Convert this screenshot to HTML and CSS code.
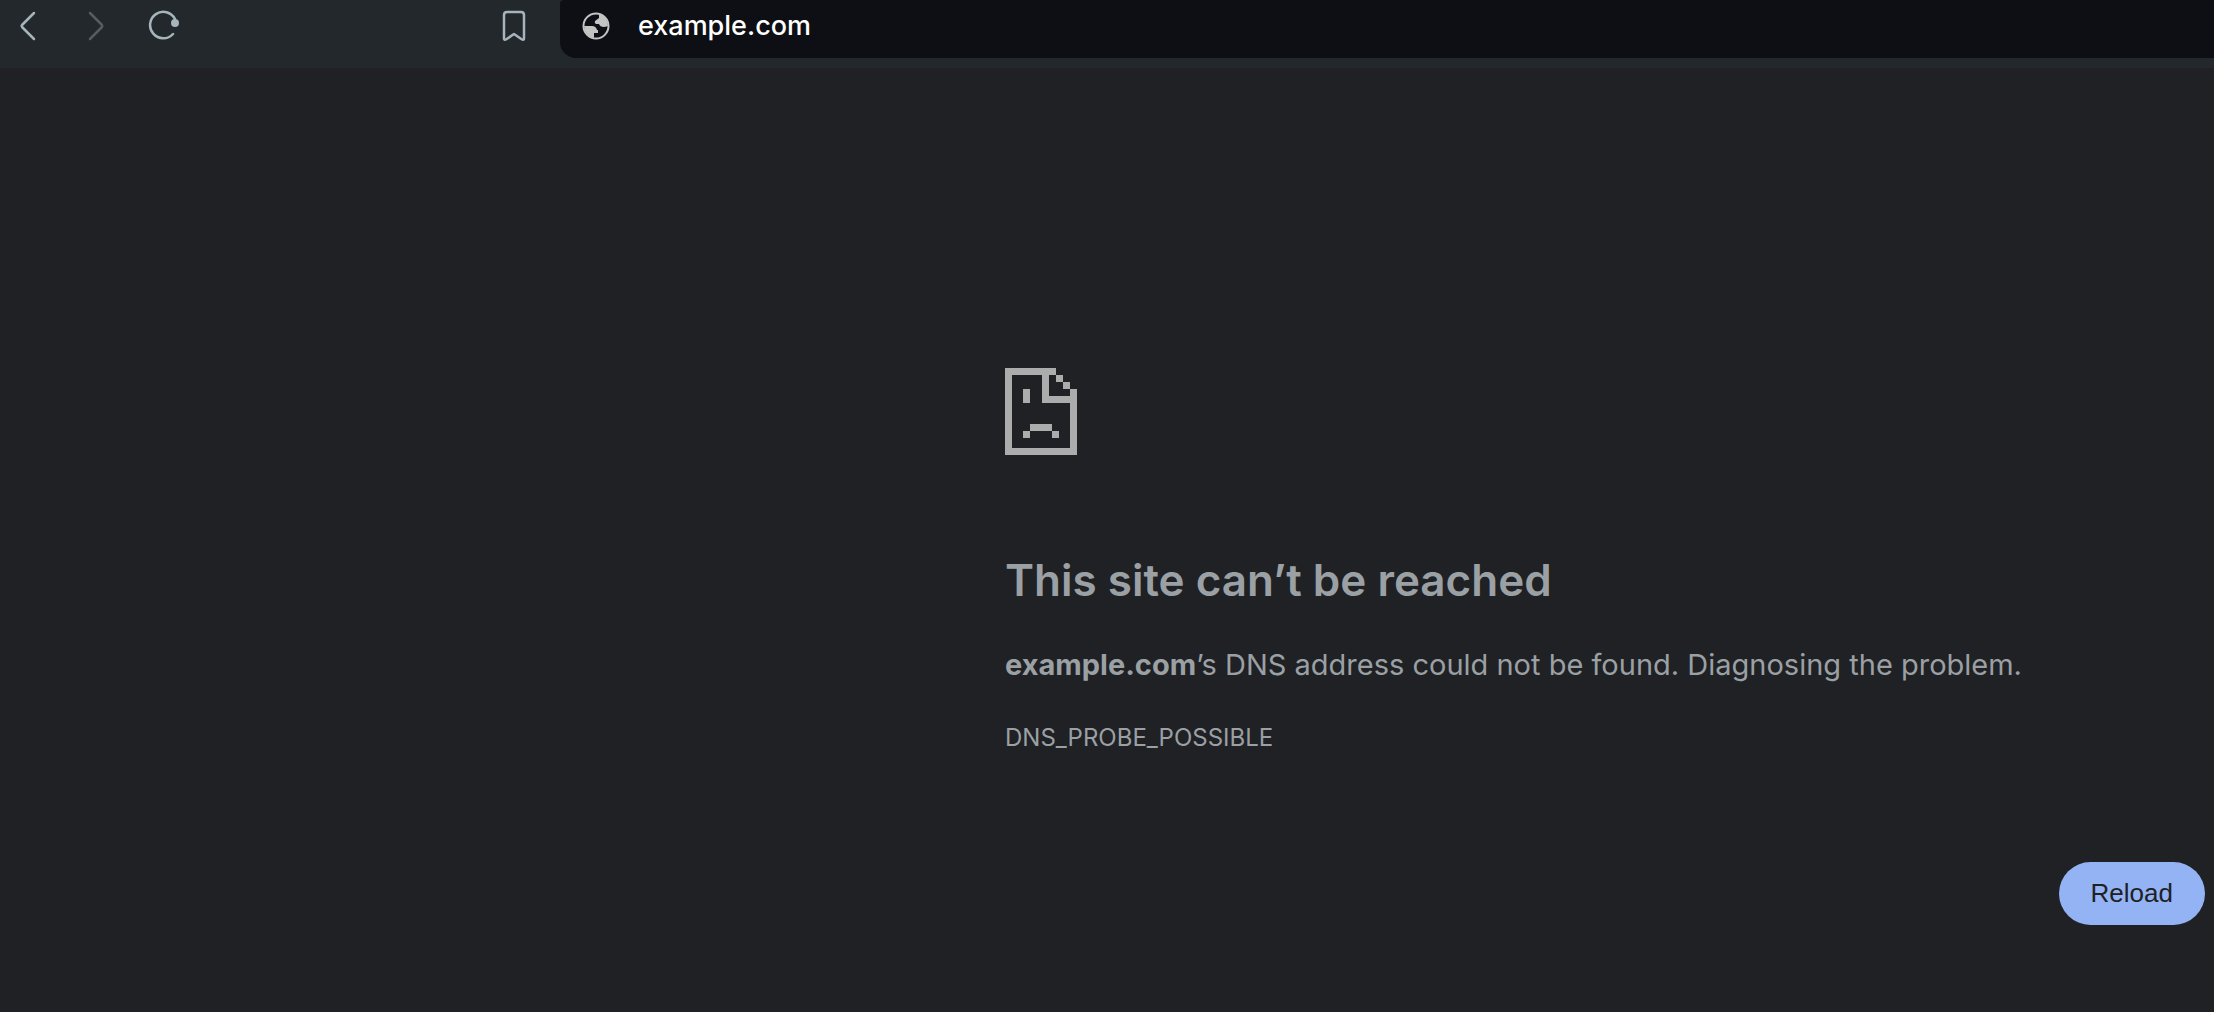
FILE: index.html
```html
<!DOCTYPE html>
<html lang="en">
<head>
<meta charset="utf-8">
<title>example.com</title>
<link rel="stylesheet" href="styles.css">
</head>
<body>
<header class="toolbar">
  <nav class="nav-buttons" aria-label="Browser navigation">
    <button class="icon-button" type="button" aria-label="Back">
      <svg width="32" height="32" viewBox="0 0 32 32"><path d="M22 3 10.500 14.500Q9 16 10.500 17.500L22 29" /></svg>
    </button>
    <button class="icon-button icon-button-dim" type="button" aria-label="Forward">
      <svg width="32" height="32" viewBox="0 0 32 32"><path d="M10 3 21.500 14.500Q23 16 21.500 17.500L10 29" /></svg>
    </button>
    <button class="icon-button" type="button" aria-label="Reload page">
      <svg width="32" height="32" viewBox="0 0 32 32"><path d="M25 24A13.200 13.200 0 1 1 27 9" /><circle class="solid" cx="27" cy="13" r="4" /></svg>
    </button>
  </nav>
  <button class="icon-button" type="button" aria-label="Bookmark">
    <svg width="32" height="32" viewBox="0 0 32 32"><path d="M6 28.500V5Q6 2 9 2H23Q26 2 26 5V28.500Q26 30.500 24 29.500L16 24 8 29.500Q6 30.500 6 28.500Z" /></svg>
  </button>
  <div class="address">
    <svg class="globe" width="28" height="28" viewBox="0 0 28 28" aria-hidden="true">
      <circle class="globe-ring" cx="14" cy="14" r="12.500" />
      <path class="globe-land" d="M17 2Q25 4 26 14Q23 15 22 15Q18 15 17 12H14Q12 11 13 9L17 6ZM2 14H10Q14 14 15 18H16V21H12V26Q3 24 2 14Z" />
    </svg>
    <input class="address-input" type="text" aria-label="Address" value="example.com">
  </div>
</header>
<main class="page">
  <section class="error">
    <svg class="sad-page" width="72" height="87" viewBox="0 0 72 87" aria-hidden="true">
      <path d="M0 0H51V7H44V28H65V21H72V87H0ZM7 7V80H65V35H37V7Z" />
      <path d="M51 7h7v7h-7zM58 14h7v7h-7zM18 21h7v14h-7zM25 56h22v7H25zM18 63h7v7h-7zM47 63h7v7h-7z" />
    </svg>
    <h1 class="title">This site can’t be reached</h1>
    <p class="message"><strong>example.com</strong>’s DNS address could not be found. Diagnosing the problem.</p>
    <p class="code">DNS_PROBE_POSSIBLE</p>
    <div class="actions">
      <button class="reload" type="button">Reload</button>
    </div>
  </section>
</main>
</body>
</html>
```
FILE: styles.css
```css
* {
  box-sizing: border-box;
}

body {
  margin: 0;
  min-height: 100vh;
  background: #202124;
  color: #9aa0a4;
  font-family: Inter, "Liberation Sans", sans-serif;
}

.toolbar {
  display: flex;
  align-items: flex-start;
  height: 68px;
  padding-left: 12px;
  background: #22282b;
}

.nav-buttons {
  display: flex;
  gap: 36px;
  margin-right: 318px;
}

.icon-button {
  display: flex;
  padding: 10px 0;
  border: 0;
  background: none;
  color: #a6b4bc;
}

.icon-button-dim {
  color: #555d61;
}

.icon-button svg {
  fill: none;
  stroke: currentColor;
  stroke-width: 2.5;
  stroke-linecap: round;
  stroke-linejoin: round;
}

.icon-button .solid {
  fill: currentColor;
  stroke: none;
}

.address {
  display: flex;
  flex: 1;
  align-items: center;
  gap: 28px;
  height: 58px;
  margin-left: 30px;
  padding: 0 0 6px 22px;
  border-radius: 4px 0 0 16px;
  background: #0e0f14;
}

.globe-ring {
  fill: none;
  stroke: #c4c4c4;
  stroke-width: 2;
}

.globe-land {
  fill: #c4c4c4;
}

.address-input {
  flex: 1;
  min-width: 0;
  padding: 0;
  border: 0;
  outline: 0;
  background: none;
  color: #fff;
  font: 500 27px/36px Inter, "Liberation Sans", sans-serif;
}

.page {
  display: flex;
  justify-content: flex-end;
  padding: 300px 9px 0;
}

.error {
  width: 100%;
  max-width: 1200px;
}

.sad-page {
  display: block;
  fill: #acacac;
}

.title {
  margin: 97px 0 0;
  font-size: 44px;
  font-weight: 600;
  line-height: 56px;
}

.message {
  margin: 33px 0 0;
  font-size: 29px;
  line-height: 48px;
}

.code {
  margin: 31px 0 0;
  font-size: 24px;
  line-height: 36px;
}

.actions {
  display: flex;
  justify-content: flex-end;
  margin-top: 106px;
}

.reload {
  padding: 16px 32px;
  border: 0;
  border-radius: 32px;
  background: #94b3f4;
  color: #202124;
  font: 26px/31px "Liberation Sans", Arial, sans-serif;
}
```
